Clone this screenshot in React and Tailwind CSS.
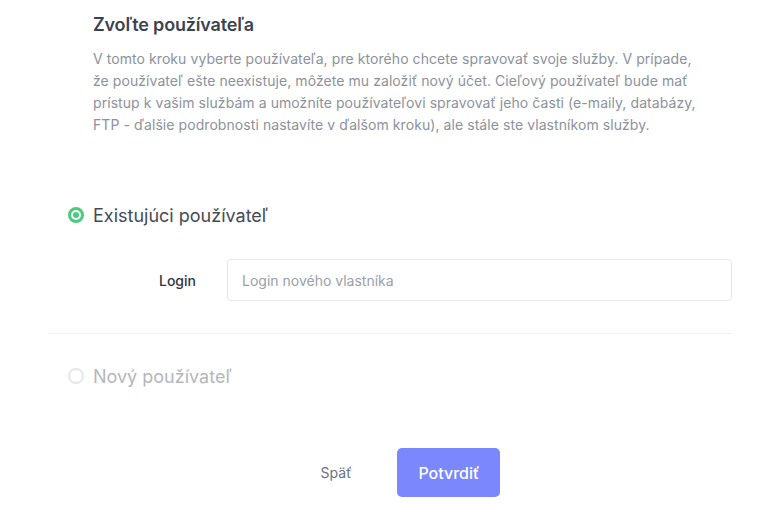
export default function App() {
  return (
    <div className="min-h-screen bg-white font-['Inter',sans-serif] antialiased">
      <div className="ml-[48px] w-[684px]">
        <div className="pl-[45px] pt-[11px]">
          <h2 className="text-[18px] leading-[28px] font-semibold text-[#3b4350] tracking-[-0.01em]">Zvoľte používateľa</h2>
          <p className="mt-[9px] text-[14px] leading-[22px] text-[#8c929c] w-[612px] tracking-[0.005em]">
            V tomto kroku vyberte používateľa, pre ktorého chcete spravovať svoje služby. V prípade, že používateľ ešte neexistuje, môžete mu založiť nový účet. Cieľový používateľ bude mať prístup k vašim službám a umožníte používateľovi spravovať jeho časti (e-maily, databázy, FTP - ďalšie podrobnosti nastavíte v ďalšom kroku), ale stále ste vlastníkom služby.
          </p>
        </div>

        <label className="mt-[65px] flex items-center gap-[9px] pl-[20px] h-[28px] cursor-pointer">
          <span className="w-[16px] h-[16px] rounded-full border-[3px] border-[#4ccb82] flex items-center justify-center bg-white">
            <span className="w-[6px] h-[6px] rounded-full bg-[#4ccb82]"></span>
          </span>
          <span className="text-[18px] text-[#444b57]">Existujúci používateľ</span>
        </label>

        <div className="mt-[30px] flex items-center">
          <span className="w-[179px] pl-[111px] text-[14px] font-medium text-[#2f3640]">Login</span>
          <input
            type="text"
            placeholder="Login nového vlastníka"
            className="flex-1 h-[42px] rounded-[4px] border border-[#e5e7eb] px-[14px] text-[14px] text-[#374151] placeholder:text-[#9aa0aa] outline-none"
          />
        </div>

        <div className="mt-[32px] border-t border-[#eeeff1]"></div>

        <label className="mt-[28px] flex items-center gap-[9px] pl-[20px] h-[28px] cursor-pointer">
          <span className="w-[16px] h-[16px] rounded-full border-[2px] border-[#e6e7ea] bg-white"></span>
          <span className="text-[18px] text-[#b3b7be]">Nový používateľ</span>
        </label>

        <div className="mt-[58px] flex items-center justify-center gap-[46px] pl-[41px]">
          <button className="text-[14px] text-[#6b7280]">Späť</button>
          <button className="h-[49px] w-[103px] rounded-[5px] bg-[#7b87fc] text-white text-[16px] font-medium">Potvrdiť</button>
        </div>
      </div>
    </div>
  );
}
